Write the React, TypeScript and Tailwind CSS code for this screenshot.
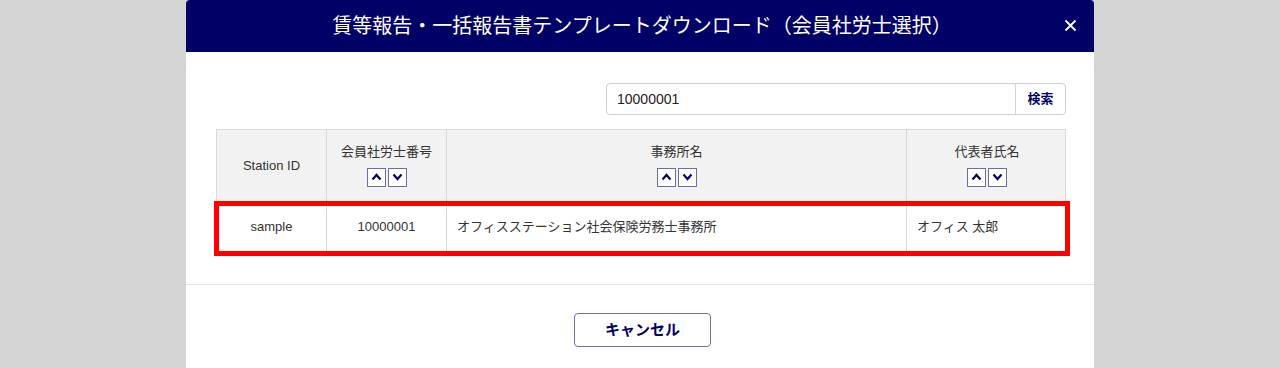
import React from 'react';

const font = '"Liberation Sans", "Noto Sans CJK JP", sans-serif';

function SortButtons() {
  return (
    <div className="flex gap-[2px] mt-[6px]">
      <button className="w-[19px] h-[19px] border border-[#6b6bb0] bg-white flex items-center justify-center">
        <svg width="11" height="8" viewBox="0 0 11 8">
          <path d="M1.5 6.5 L5.5 2 L9.5 6.5" fill="none" stroke="#000066" strokeWidth="2.2" />
        </svg>
      </button>
      <button className="w-[19px] h-[19px] border border-[#6b6bb0] bg-white flex items-center justify-center">
        <svg width="11" height="8" viewBox="0 0 11 8">
          <path d="M1.5 1.5 L5.5 6 L9.5 1.5" fill="none" stroke="#000066" strokeWidth="2.2" />
        </svg>
      </button>
    </div>
  );
}

const rows = [
  { id: 'sample', no: '10000001', office: 'オフィスステーション社会保険労務士事務所', rep: 'オフィス 太郎' },
];

export default function App() {
  return (
    <div className="w-full h-[368px] bg-[#d5d5d5] overflow-hidden flex justify-center" style={{ fontFamily: font }}>
      <div className="w-[908px] bg-white rounded-t-[4px] flex flex-col shrink-0">
        <div className="h-[52px] bg-[#000066] rounded-t-[4px] relative flex items-center justify-center text-white text-[20px]">
          <span className="pl-[4px]">賃等報告・一括報告書テンプレートダウンロード（会員社労士選択）</span>
          <button className="absolute right-[17px] top-[19px] w-[13px] h-[13px]">
            <svg width="13" height="13" viewBox="0 0 13 13">
              <path d="M1.5 1.5 L11.5 11.5 M11.5 1.5 L1.5 11.5" stroke="white" strokeWidth="1.8" />
            </svg>
          </button>
        </div>

        <div className="pl-[30px] pr-[28px] pt-[31px] pb-[31px]">
          <div className="flex justify-end">
            <div className="flex w-[460px] h-[32px] border border-[#cfcfcf] rounded-[4px] overflow-hidden">
              <input
                className="flex-1 px-[10px] text-[14px] text-[#222] outline-none"
                defaultValue="10000001"
              />
              <button className="w-[50px] border-l border-[#d5d5d5] text-[13px] font-bold text-[#000066]">検索</button>
            </div>
          </div>

          <div className="mt-[14px] border border-[#d9d9d9] text-[13px] text-[#333]">
            <div className="grid grid-cols-[110px_120px_460px_160px] h-[72px] bg-[#f2f2f2] border-b border-[#d9d9d9]">
              <div className="flex items-center justify-center border-r border-[#d9d9d9]">Station ID</div>
              <div className="flex flex-col items-center justify-center border-r border-[#d9d9d9] pb-[2px]">
                <span>会員社労士番号</span>
                <SortButtons />
              </div>
              <div className="flex flex-col items-center justify-center border-r border-[#d9d9d9] pb-[2px]">
                <span>事務所名</span>
                <SortButtons />
              </div>
              <div className="flex flex-col items-center justify-center pb-[2px]">
                <span>代表者氏名</span>
                <SortButtons />
              </div>
            </div>
            {rows.map((r) => (
              <div key={r.id} className="relative grid grid-cols-[110px_120px_460px_160px] h-[50px]">
                <div className="flex items-center justify-center border-r border-[#d9d9d9]">{r.id}</div>
                <div className="flex items-center justify-center border-r border-[#d9d9d9]">{r.no}</div>
                <div className="flex items-center px-[10px] border-r border-[#d9d9d9]">{r.office}</div>
                <div className="flex items-center px-[10px]">{r.rep}</div>
                <div className="absolute left-[-3px] right-[-5px] top-[-1px] bottom-[-4px] border-[5px] border-[#ff0000] pointer-events-none" />
              </div>
            ))}
          </div>
        </div>

        <div className="border-t border-[#e5e5e5] flex justify-center pt-[28px]">
          <button className="ml-[5px] w-[137px] h-[34px] border-[1.5px] border-[#6f6fae] rounded-[4px] bg-white text-[15px] font-bold text-[#000066]">
            キャンセル
          </button>
        </div>
      </div>
    </div>
  );
}
